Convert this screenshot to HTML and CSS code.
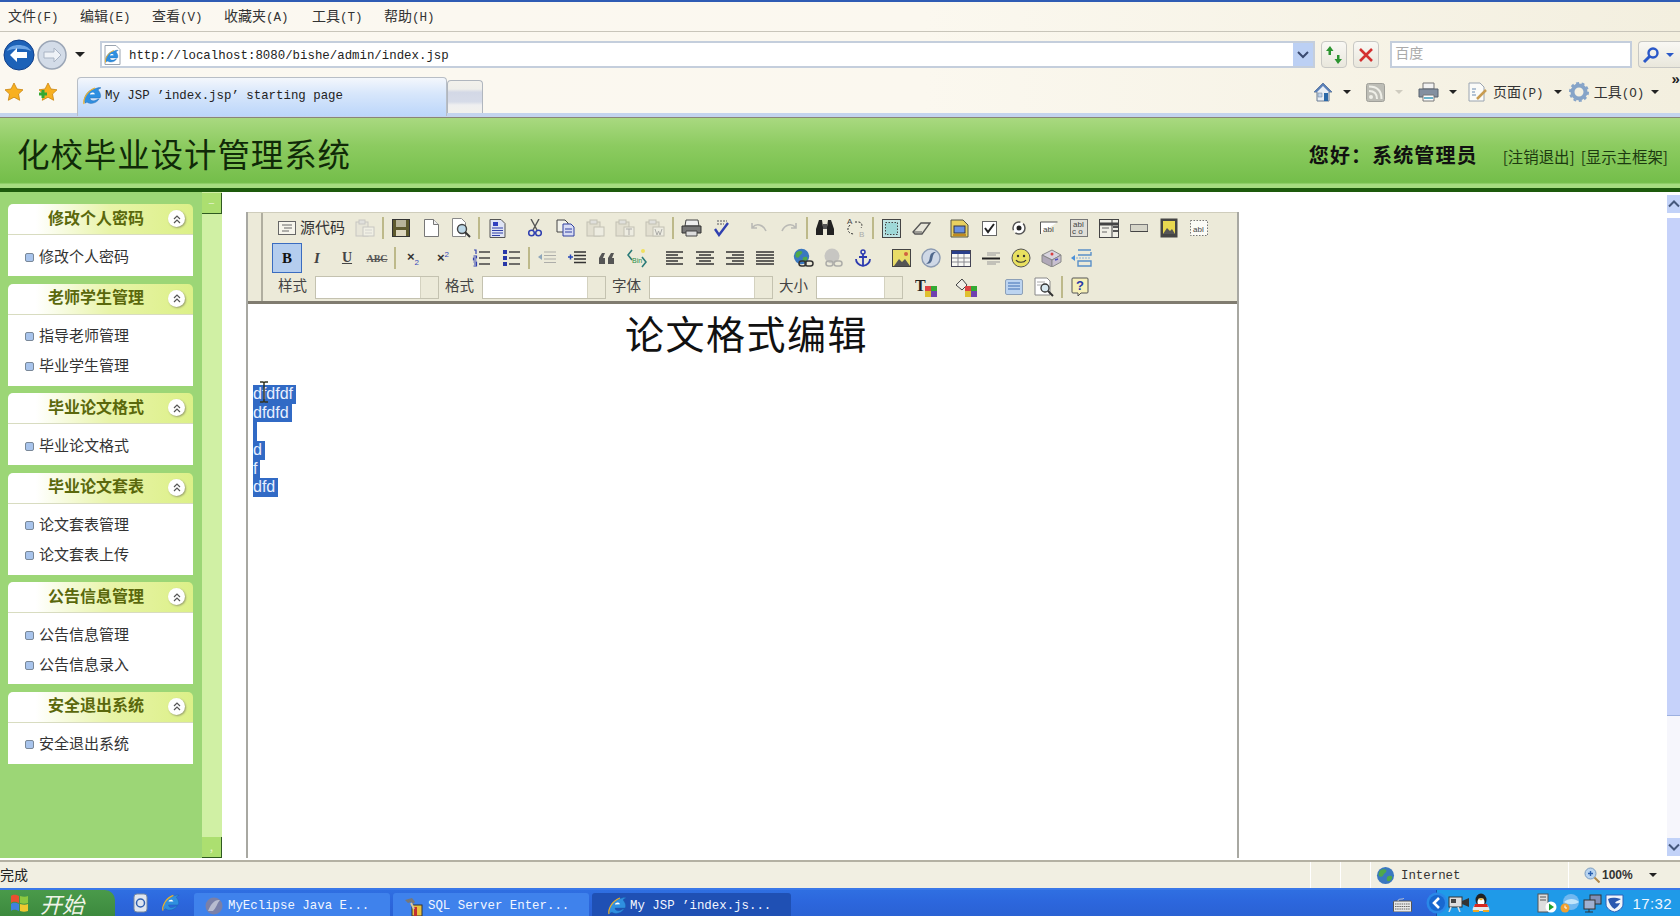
FILE: index.html
```html
<!DOCTYPE html>
<html lang="zh">
<head>
<meta charset="utf-8">
<title>化校毕业设计管理系统</title>
<link rel="stylesheet" href="styles.css">
</head>
<body>
<svg class="defs" width="0" height="0" aria-hidden="true">
  <defs>
    <symbol id="ie" viewBox="0 0 20 20">
      <path d="M3 17C1 13 4 5 12 3c3-1 6-2 7-1-1 0-2 1-3 2 3 3 3 7 2 8H8c0 3 4 4 8 1l1 0c-2 4-9 6-12 3-1 1-2 1-2 1z" fill="#2f8fe0" stroke="#1a5fa8" stroke-width=".4"/>
      <path d="M8 8.500c0-2 4-3 5-.2z" fill="#fff"/>
      <path d="M2 18C1 13 5 5 13 2" fill="none" stroke="#e8b030" stroke-width="1.300"/>
    </symbol>
    <symbol id="globe" viewBox="0 0 20 20">
      <circle cx="10" cy="10" r="9" fill="#3a78c0"/>
      <path d="M4 5c3-2 6-2 7 0 0 2-2 2-3 4s-2 3-4 2-1-4 0-6zM12 11c2-1 5-1 5 1s-2 4-4 4-2-3-1-5z" fill="#4fa84a"/>
    </symbol>
    <symbol id="fav" viewBox="0 0 20 20">
      <path d="M10 1l3 6 6 .8-4.500 4.200 1.200 6.300L10 15.200l-5.700 3.100L5.500 12 1 7.800 7 7z" fill="#f8b020" stroke="#c88410" stroke-width=".8"/>
    </symbol>
  </defs>
</svg>

<header class="browser">
  <nav class="menubar">
    <span class="menu">文件<i>(F)</i></span>
    <span class="menu">编辑<i>(E)</i></span>
    <span class="menu">查看<i>(V)</i></span>
    <span class="menu menu-wide">收藏夹<i>(A)</i></span>
    <span class="menu">工具<i>(T)</i></span>
    <span class="menu">帮助<i>(H)</i></span>
  </nav>

  <div class="addressrow">
    <div class="navpill">
      <svg class="nav-back" width="32" height="32" viewBox="0 0 32 32"><circle cx="16" cy="16" r="15" fill="#1d62b8" stroke="#12408a"/><path d="M4 12c3-8 20-8 24 0-6-3-18-3-24 0z" fill="#6ea6e6"/><path d="M7 16l7-7v4h10v6H14v4z" fill="#fff"/></svg>
      <svg class="nav-fwd" width="30" height="30" viewBox="0 0 30 30"><circle cx="15" cy="15" r="14" fill="#d3dce8" stroke="#9ba6b6" stroke-width="1.500"/><path d="M24 15l-7-7v4H7v6h10v4z" fill="#eef2f7" stroke="#a9b4c4"/></svg>
    </div>
    <span class="caret caret-nav"></span>
    <div class="address">
      <svg class="pageicon" width="17" height="20" viewBox="0 0 17 20"><path d="M1 .5h11l4 4v15H1z" fill="#fff" stroke="#9aa4b0"/><use href="#ie" x="0" y="4" width="15" height="15"/></svg>
      <span class="url">http://localhost:8080/bishe/admin/index.jsp</span>
      <span class="addr-drop"><svg width="12" height="8" viewBox="0 0 12 8"><path d="M1 1l5 5 5-5" fill="none" stroke="#3a4a70" stroke-width="2"/></svg></span>
    </div>
    <span class="chromebtn"><svg width="18" height="18" viewBox="0 0 18 18"><path d="M6 9V5H8.500L5 0 1 5h2.500v4zM12 9v4H9.500l3.500 5 4-5h-2.500V9z" fill="#2c9430"/></svg></span>
    <span class="chromebtn"><svg width="16" height="16" viewBox="0 0 16 16"><path d="M2 2l12 12M14 2L2 14" stroke="#d43030" stroke-width="2.600"/></svg></span>
    <div class="searchbox">百度</div>
    <div class="searchbtn">
      <svg width="18" height="18" viewBox="0 0 18 18"><circle cx="11" cy="7" r="4.500" fill="none" stroke="#2a58c8" stroke-width="2.400"/><path d="M8 10l-6 6" stroke="#2a58c8" stroke-width="3"/></svg>
      <span class="caret caret-blue"></span>
    </div>
  </div>

  <div class="tabrow">
    <div class="favs">
      <svg width="20" height="20"><use href="#fav"/></svg>
      <svg width="20" height="20" viewBox="0 0 20 20"><use href="#fav"/><path d="M1 12h8M5 8v8" stroke="#34a834" stroke-width="3"/></svg>
    </div>
    <div class="tab">
      <svg width="20" height="20"><use href="#ie"/></svg>
      <span class="tabtext">My JSP ’index.jsp’ starting page</span>
    </div>
    <div class="newtab"></div>
    <div class="commands">
      <svg class="cmd-home" width="20" height="20" viewBox="0 0 20 20"><path d="M10 1L1 10h3v9h12v-9h3z" fill="#e9eef4" stroke="#6a7c94"/><path d="M10 1L1 10h3l6-6 6 6h3z" fill="#5a80b8"/><path d="M11 11h4v8h-4z" fill="#2a68a8"/><path d="M5 11h4v4H5z" fill="#bcd0e8" stroke="#6a7c94" stroke-width=".5"/></svg>
      <span class="caret caret-cmd"></span>
      <svg class="cmd-rss" width="19" height="19" viewBox="0 0 19 19"><rect x=".5" y=".5" width="18" height="18" rx="2" fill="#bdbdb6" stroke="#a0a09a"/><circle cx="5" cy="14" r="2" fill="#efefe8"/><path d="M3 8c5 0 8 3 8 8M3 3.500c8 0 12.500 4.500 12.500 12.500" fill="none" stroke="#efefe8" stroke-width="2"/></svg>
      <span class="caret caret-cmd caret-faded"></span>
      <svg class="cmd-print" width="21" height="20" viewBox="0 0 21 20"><path d="M5 1h11v6H5z" fill="#f2f2f2" stroke="#777"/><path d="M1 7h19v8H1z" fill="#8490a0" stroke="#59636f"/><path d="M5 13h11v6H5z" fill="#fff" stroke="#777"/><path d="M6 16h9" stroke="#3a9ab8" stroke-width="1.500"/></svg>
      <span class="caret caret-cmd"></span>
      <svg class="cmd-page" width="20" height="20" viewBox="0 0 20 20"><path d="M1 1h11l4 4v14H1z" fill="#fbfbf8" stroke="#9aa4b0"/><path d="M4 7h4M4 10h3M4 13h4" stroke="#6a8ab0"/><path d="M9 17l9-9" stroke="#c89c50" stroke-width="2.500"/></svg>
      <span class="cmdtext">页面<i>(P)</i></span>
      <span class="caret caret-cmd"></span>
      <svg class="cmd-gear" width="20" height="20" viewBox="0 0 20 20"><circle cx="10" cy="10" r="6.500" fill="none" stroke="#86a4c8" stroke-width="4"/><circle cx="10" cy="10" r="9" fill="none" stroke="#86a4c8" stroke-width="2" stroke-dasharray="3 2.600"/></svg>
      <span class="cmdtext">工具<i>(O)</i></span>
      <span class="caret caret-cmd caret-last"></span>
      <span class="more">»</span>
    </div>
  </div>
</header>

<section class="banner">
  <h1 class="sys-title">化校毕业设计管理系统</h1>
  <div class="welcome">您好：系统管理员</div>
  <a class="banner-link">[注销退出]</a>
  <a class="banner-link">[显示主框架]</a>
</section>

<main class="workspace">
  <aside class="sidebar">
    <section class="card">
      <h2 class="card-head">修改个人密码<span class="toggle"><svg width="10" height="10" viewBox="0 0 10 10"><path d="M2 5l3-3 3 3M2 9l3-3 3 3" fill="none" stroke="#555" stroke-width="1.200"/></svg></span></h2>
      <ul class="card-body"><li>修改个人密码</li></ul>
    </section>
    <section class="card">
      <h2 class="card-head">老师学生管理<span class="toggle"><svg width="10" height="10" viewBox="0 0 10 10"><path d="M2 5l3-3 3 3M2 9l3-3 3 3" fill="none" stroke="#555" stroke-width="1.200"/></svg></span></h2>
      <ul class="card-body"><li>指导老师管理</li><li>毕业学生管理</li></ul>
    </section>
    <section class="card">
      <h2 class="card-head">毕业论文格式<span class="toggle"><svg width="10" height="10" viewBox="0 0 10 10"><path d="M2 5l3-3 3 3M2 9l3-3 3 3" fill="none" stroke="#555" stroke-width="1.200"/></svg></span></h2>
      <ul class="card-body"><li>毕业论文格式</li></ul>
    </section>
    <section class="card">
      <h2 class="card-head">毕业论文套表<span class="toggle"><svg width="10" height="10" viewBox="0 0 10 10"><path d="M2 5l3-3 3 3M2 9l3-3 3 3" fill="none" stroke="#555" stroke-width="1.200"/></svg></span></h2>
      <ul class="card-body"><li>论文套表管理</li><li>论文套表上传</li></ul>
    </section>
    <section class="card">
      <h2 class="card-head">公告信息管理<span class="toggle"><svg width="10" height="10" viewBox="0 0 10 10"><path d="M2 5l3-3 3 3M2 9l3-3 3 3" fill="none" stroke="#555" stroke-width="1.200"/></svg></span></h2>
      <ul class="card-body"><li>公告信息管理</li><li>公告信息录入</li></ul>
    </section>
    <section class="card">
      <h2 class="card-head">安全退出系统<span class="toggle"><svg width="10" height="10" viewBox="0 0 10 10"><path d="M2 5l3-3 3 3M2 9l3-3 3 3" fill="none" stroke="#555" stroke-width="1.200"/></svg></span></h2>
      <ul class="card-body"><li>安全退出系统</li></ul>
    </section>
  </aside>

  <div class="splitter">
    <span class="split-btn">–</span>
    <span class="split-btn">,</span>
  </div>

  <div class="content">
    <div class="editor">
      <div class="toolbar">
        <div class="grip"></div>
        <div class="rows">
          <div class="tbrow">
            <span class="src"><svg width="18" height="16" viewBox="0 0 18 16"><rect x=".5" y="1.500" width="17" height="13" fill="#f6f5ec" stroke="#666"/><path d="M4 5h10M6 8h8M4 11h7" stroke="#666"/></svg><b>源代码</b></span>
            <span class="tb faded"><svg width="20" height="18" viewBox="0 0 20 18"><rect x="1" y="3" width="12" height="14" fill="#e6e4d8" stroke="#bbb"/><rect x="4" y="1" width="6" height="4" fill="#ddd" stroke="#bbb"/><rect x="8" y="8" width="11" height="9" fill="#f2f1e8" stroke="#bbb"/><path d="M10 11h7M10 14h7" stroke="#ccc"/></svg></span>
            <span class="sep"></span>
            <span class="tb"><svg width="18" height="18" viewBox="0 0 18 18"><rect x=".5" y=".5" width="17" height="17" fill="#5e5a2e" stroke="#333"/><rect x="4" y="1" width="10" height="7" fill="#b8b49a"/><rect x="4" y="11" width="10" height="6" fill="#ded8c0"/></svg></span>
            <span class="tb"><svg width="17" height="18" viewBox="0 0 17 18"><path d="M1.500.5h9l5 5v12h-14z" fill="#fff" stroke="#777"/><path d="M10.500.5v5h5" fill="#eee" stroke="#777"/></svg></span>
            <span class="tb"><svg width="20" height="20" viewBox="0 0 20 20"><path d="M1.500.5h9l4 4v14h-13z" fill="#fff" stroke="#888"/><circle cx="11" cy="11" r="4.500" fill="#bcd8e8" stroke="#444" stroke-width="1.400"/><path d="M14 14l5 5" stroke="#333" stroke-width="2"/></svg></span>
            <span class="sep"></span>
            <span class="tb"><svg width="17" height="19" viewBox="0 0 17 19"><path d="M1 .5h11l4 4v14H1z" fill="#dfe4f4" stroke="#555"/><rect x="4" y="3" width="5" height="4" fill="#3040c0"/><path d="M3 9h11M3 11.500h11M3 14h11M3 16.500h8" stroke="#3040a8"/></svg></span>
            <span class="tb gap"><svg width="14" height="18" viewBox="0 0 14 18"><path d="M3 0l6 11M11 0L5 11" stroke="#555" stroke-width="1.400"/><circle cx="3.500" cy="14" r="2.800" fill="none" stroke="#3040b0" stroke-width="1.500"/><circle cx="10.500" cy="14" r="2.800" fill="none" stroke="#3040b0" stroke-width="1.500"/></svg></span>
            <span class="tb"><svg width="19" height="18" viewBox="0 0 19 18"><path d="M1 1h8l3 3v9H1z" fill="#f2f2ea" stroke="#444"/><path d="M7 5h8l3 3v9H7z" fill="#d8dcf4" stroke="#3040a0"/><path d="M9 10h7M9 13h7" stroke="#3040a0"/></svg></span>
            <span class="tb faded"><svg width="19" height="18" viewBox="0 0 19 18"><rect x="1" y="3" width="13" height="14" fill="#dfdccd" stroke="#b5b3a8"/><rect x="4" y="1" width="7" height="4" fill="#ddd" stroke="#b5b3a8"/><rect x="8" y="8" width="10" height="9" fill="#eeede4" stroke="#b5b3a8"/></svg></span>
            <span class="tb faded"><svg width="20" height="18" viewBox="0 0 20 18"><rect x="1" y="3" width="13" height="14" fill="#dfdccd" stroke="#b5b3a8"/><rect x="4" y="1" width="7" height="4" fill="#ddd" stroke="#b5b3a8"/><rect x="9" y="8" width="10" height="9" fill="#eeede4" stroke="#b5b3a8"/><path d="M11 10h6M14 10v6" stroke="#999"/></svg></span>
            <span class="tb faded"><svg width="20" height="18" viewBox="0 0 20 18"><rect x="1" y="3" width="13" height="14" fill="#dfdccd" stroke="#b5b3a8"/><rect x="4" y="1" width="7" height="4" fill="#ddd" stroke="#b5b3a8"/><rect x="8" y="8" width="11" height="9" fill="#eeede4" stroke="#b5b3a8"/><path d="M10 10l2 6 1.500-4 1.500 4 2-6" fill="none" stroke="#999"/></svg></span>
            <span class="sep"></span>
            <span class="tb"><svg width="21" height="18" viewBox="0 0 21 18"><path d="M5 1h12l1 6H4z" fill="#eee" stroke="#444"/><path d="M1 7h19v7H1z" fill="#777" stroke="#333"/><path d="M5 12h11v5H5z" fill="#ddd" stroke="#444"/></svg></span>
            <span class="tb"><svg width="18" height="18" viewBox="0 0 18 18"><path d="M3 10l4 6 9-12" fill="none" stroke="#3040b0" stroke-width="2.400"/><path d="M5 2h10M5 5h7" stroke="#888" stroke-width="1.600" stroke-dasharray="2 1"/></svg></span>
            <span class="tb gap faded"><svg width="16" height="12" viewBox="0 0 16 12"><path d="M1 1v5h5M1.500 5.500C5 1 12 2 15 9" fill="none" stroke="#aaa" stroke-width="1.600"/></svg></span>
            <span class="tb faded"><svg width="16" height="12" viewBox="0 0 16 12"><path d="M15 1v5h-5M14.500 5.500C11 1 4 2 1 9" fill="none" stroke="#aaa" stroke-width="1.600"/></svg></span>
            <span class="sep"></span>
            <span class="tb"><svg width="20" height="18" viewBox="0 0 20 18"><path d="M4 1h3l1 7v8H1v-6zM16 1h-3l-1 7v8h7v-6z" fill="#222"/><rect x="8" y="5" width="4" height="5" fill="#555"/></svg></span>
            <span class="tb"><svg width="21" height="20" viewBox="0 0 21 20"><path d="M5 7C1 11 3 16 9 16" fill="none" stroke="#333" stroke-dasharray="2 1.500"/><path d="M10 4h4c4 1 3 5 2 6" fill="none" stroke="#333" stroke-dasharray="2 1.500"/><text class="svgtxt" x="2" y="6">A</text><text class="svgtxt svgfade" x="14" y="19">B</text></svg></span>
            <span class="sep"></span>
            <span class="tb"><svg width="19" height="19" viewBox="0 0 19 19"><rect x=".5" y=".5" width="18" height="18" fill="#bfe4e4" stroke="#444"/><path d="M3.500 3.500h12v12h-12z" fill="#9ed8d8" stroke="#444" stroke-dasharray="1.500 1.500"/></svg></span>
            <span class="tb"><svg width="19" height="14" viewBox="0 0 19 14"><path d="M1 11l8-9 9 0-8 11H3z" fill="#e8e6da" stroke="#555" stroke-width="1.300"/><path d="M1 11h9" stroke="#555"/></svg></span>
            <span class="tb gap"><svg width="19" height="19" viewBox="0 0 19 19"><path d="M1 1h12l5 5v12H1z" fill="#e8d060" stroke="#554"/><rect x="4" y="7" width="11" height="7" fill="#6890e0" stroke="#334"/><path d="M3 16h13" stroke="#c08a20" stroke-width="2"/></svg></span>
            <span class="tb"><svg width="15" height="15" viewBox="0 0 15 15"><rect x=".5" y=".5" width="14" height="14" fill="#fff" stroke="#666"/><path d="M3 7l3 4 6-8" fill="none" stroke="#222" stroke-width="2"/></svg></span>
            <span class="tb"><svg width="14" height="14" viewBox="0 0 14 14"><circle cx="7" cy="7" r="6" fill="#fff" stroke="#555" stroke-width="1.500" stroke-dasharray="13 3"/><circle cx="7" cy="7" r="2.500" fill="#222"/></svg></span>
            <span class="tb"><svg width="18" height="14" viewBox="0 0 18 14"><path d="M17.500 1H.5v12" fill="#fff" stroke="#555"/><text class="svgtxt" x="3" y="11">abl</text></svg></span>
            <span class="tb"><svg width="18" height="18" viewBox="0 0 18 18"><rect x=".5" y=".5" width="17" height="17" fill="#e0dfd8" stroke="#777"/><text class="svgtxt" x="3" y="8">abl</text><text class="svgtxt" x="2" y="15">c o</text></svg></span>
            <span class="tb"><svg width="20" height="19" viewBox="0 0 20 19"><rect x=".5" y=".5" width="19" height="18" fill="#f0efe6" stroke="#444"/><path d="M1 5h18" stroke="#444" stroke-width="3"/><path d="M13 1v17" stroke="#444"/><path d="M3 9h7M3 13h5" stroke="#666"/><path d="M14 8h5M14 12h5" stroke="#555" stroke-width="2"/></svg></span>
            <span class="tb"><svg width="18" height="8" viewBox="0 0 18 8"><rect x=".5" y=".5" width="17" height="7" fill="#d6d5c8" stroke="#777"/><path d="M1 7.500h17" stroke="#444"/></svg></span>
            <span class="tb"><svg width="18" height="20" viewBox="0 0 18 20"><rect x=".5" y=".5" width="17" height="19" fill="#444"/><rect x="3" y="3" width="12" height="13" fill="#e8d850"/><path d="M3 16l4-6 3 3 2-2 3 5z" fill="#555"/></svg></span>
            <span class="tb"><svg width="18" height="16" viewBox="0 0 18 16"><rect x=".5" y=".5" width="17" height="15" fill="#fbfbf6" stroke="#777" stroke-dasharray="1.500 1.500"/><text class="svgtxt" x="3" y="12">abl</text></svg></span>
          </div>

          <div class="tbrow">
            <span class="tb active"><b class="gl-b">B</b></span>
            <span class="tb"><i class="gl-i">I</i></span>
            <span class="tb"><u class="gl-u">U</u></span>
            <span class="tb"><s class="gl-s">ABC</s></span>
            <span class="sep"></span>
            <span class="tb"><span class="gl-x">×<sub>2</sub></span></span>
            <span class="tb"><span class="gl-x">×<sup>2</sup></span></span>
            <span class="tb gap-s"><svg width="18" height="18" viewBox="0 0 18 18"><path d="M7 3h11M7 9h11M7 15h11" stroke="#444" stroke-width="1.300"/><path d="M2 1h2v4M1.500 7h3v2h-3v2h3M1.500 13h3v4h-3M2 15h2" fill="none" stroke="#3040b0" stroke-width="1.200"/></svg></span>
            <span class="tb"><svg width="18" height="18" viewBox="0 0 18 18"><path d="M7 3h11M7 9h11M7 15h11" stroke="#444" stroke-width="1.300"/><path d="M1 1h4v4H1zM1 7h4v4H1zM1 13h4v4H1z" fill="#2838a8"/></svg></span>
            <span class="sep"></span>
            <span class="tb faded"><svg width="20" height="18" viewBox="0 0 20 18"><path d="M7 3h12M7 6.500h12M7 10h12M7 13.500h12" stroke="#999" stroke-width="1.200"/><path d="M1 8l4-3v6z" fill="#7090b0"/></svg></span>
            <span class="tb"><svg width="20" height="18" viewBox="0 0 20 18"><path d="M7 3h12M7 6.500h12M7 10h12M7 13.500h12" stroke="#333" stroke-width="1.300"/><path d="M1 8h5M3.500 5.500v5" stroke="#2848b8" stroke-width="1.500"/></svg></span>
            <span class="tb"><svg width="18" height="12" viewBox="0 0 18 12"><path d="M4 1h3L5 6h2v6H1V6zM13 1h3l-2 5h2v6h-6V6z" fill="#555"/></svg></span>
            <span class="tb"><svg width="20" height="20" viewBox="0 0 20 20"><path d="M5 2L1 7l4 5M15 9l4 5-4 5" fill="none" stroke="#2a7a78" stroke-width="1.600"/><text class="svgtxt svggreen" x="5" y="15">Bin</text><circle cx="16" cy="3" r="2" fill="#f0e060"/></svg></span>
            <span class="tb gap-s"><svg class="al" width="18" height="14" viewBox="0 0 18 14"><path d="M0 1h17M0 4h12M0 7h17M0 10h12M0 13h17" stroke="#333" stroke-width="1.300"/></svg></span>
            <span class="tb"><svg class="al" width="18" height="14" viewBox="0 0 18 14"><path d="M0 1h18M3 4h12M0 7h18M3 10h12M0 13h18" stroke="#333" stroke-width="1.300"/></svg></span>
            <span class="tb"><svg class="al" width="18" height="14" viewBox="0 0 18 14"><path d="M0 1h18M6 4h12M0 7h18M6 10h12M0 13h18" stroke="#333" stroke-width="1.300"/></svg></span>
            <span class="tb"><svg class="al" width="18" height="14" viewBox="0 0 18 14"><path d="M0 1h18M0 4h18M0 7h18M0 10h18M0 13h18" stroke="#333" stroke-width="1.300"/></svg></span>
            <span class="tb gap-s"><svg width="21" height="20" viewBox="0 0 21 20"><use href="#globe" width="17" height="17"/><rect x="6" y="13" width="7" height="5" rx="2.500" fill="none" stroke="#333" stroke-width="1.500"/><rect x="12" y="13" width="8" height="5" rx="2.500" fill="none" stroke="#333" stroke-width="1.500"/></svg></span>
            <span class="tb faded"><svg width="20" height="20" viewBox="0 0 20 20"><circle cx="9" cy="8" r="7.500" fill="#bbb"/><rect x="3" y="13" width="7" height="5" rx="2.500" fill="none" stroke="#999" stroke-width="1.500"/><rect x="11" y="13" width="8" height="5" rx="2.500" fill="none" stroke="#999" stroke-width="1.500"/></svg></span>
            <span class="tb"><svg width="16" height="18" viewBox="0 0 16 18"><circle cx="8" cy="3" r="2" fill="none" stroke="#2c3ab0" stroke-width="1.500"/><path d="M8 5v12M4 8h8M1 10c0 4 3 6 7 7 4-1 7-3 7-7" fill="none" stroke="#2c3ab0" stroke-width="1.800"/></svg></span>
            <span class="tb gap-s"><svg width="19" height="18" viewBox="0 0 19 18"><rect x=".5" y=".5" width="18" height="17" fill="#e8dc68" stroke="#444"/><path d="M2 17l5-7 3 3 3-3 5 7z" fill="#555"/><circle cx="14" cy="5" r="2" fill="#d06040"/></svg></span>
            <span class="tb"><svg width="20" height="20" viewBox="0 0 20 20"><circle cx="10" cy="10" r="9" fill="#cfd8e6" stroke="#8c9bb2" stroke-width="1.400"/><path d="M15 4C9 4 9 8 8.500 11S6 15 5 16c5 0 6-3 6.500-6S13 5 15 4z" fill="#50688c"/></svg></span>
            <span class="tb"><svg width="20" height="17" viewBox="0 0 20 17"><rect x=".5" y=".5" width="19" height="16" fill="#f8f8f4" stroke="#445"/><path d="M1 2.500h18" stroke="#2a3f8a" stroke-width="3"/><path d="M1 8h18M1 12h18M7 4v12M13 4v12" stroke="#8a8a90"/></svg></span>
            <span class="tb"><svg width="18" height="15" viewBox="0 0 18 15"><path d="M0 7.500h18" stroke="#222" stroke-width="2"/><path d="M5 2h13M5 4h9M5 11h13M5 13h9" stroke="#999"/></svg></span>
            <span class="tb"><svg width="20" height="20" viewBox="0 0 20 20"><circle cx="10" cy="10" r="9" fill="#e8e060" stroke="#555"/><circle cx="7" cy="8" r="1.200" fill="#333"/><circle cx="13" cy="8" r="1.200" fill="#333"/><path d="M5 12c2 3 8 3 10 0" fill="none" stroke="#333" stroke-width="1.200"/></svg></span>
            <span class="tb"><svg width="21" height="18" viewBox="0 0 21 18"><path d="M1 6l10-5 9 5-9 5z" fill="#d8d4de" stroke="#888"/><path d="M1 6v7l10 5V11z" fill="#b0a8b8" stroke="#888"/><path d="M20 6v7l-9 5V11z" fill="#c8c0d0" stroke="#888"/><circle cx="11" cy="5" r="1.500" fill="#d84040"/><path d="M14 11l3-1" stroke="#5050c0" stroke-width="1.500"/></svg></span>
            <span class="tb"><svg width="21" height="18" viewBox="0 0 21 18"><path d="M7 1h13M7 6h13v-3M7 12h13v5H7z" fill="none" stroke="#5a90c8" stroke-width="1.400"/><path d="M0 9l4-3v6z" fill="#4a90d8"/><path d="M5 9h15" stroke="#8ab0d8" stroke-dasharray="2 1"/></svg></span>
          </div>

          <div class="tbrow tbrow-form">
            <label class="lbl">样式</label><span class="combo"><span class="combo-in"></span><span class="combo-btn"></span></span>
            <label class="lbl">格式</label><span class="combo"><span class="combo-in"></span><span class="combo-btn"></span></span>
            <label class="lbl">字体</label><span class="combo"><span class="combo-in"></span><span class="combo-btn"></span></span>
            <label class="lbl">大小</label><span class="combo combo-s"><span class="combo-in"></span><span class="combo-btn"></span></span>
            <span class="tb tb-color"><svg width="22" height="19" viewBox="0 0 22 19"><text class="svgtxt svgT" x="0" y="13">T</text><rect x="10" y="8" width="12" height="11" fill="#d44"/><rect x="16" y="8" width="6" height="5" fill="#3a3"/><rect x="10" y="13" width="6" height="6" fill="#e0c030"/><rect x="16" y="13" width="6" height="6" fill="#7040b0"/></svg></span>
            <span class="tb tb-color2"><svg width="22" height="19" viewBox="0 0 22 19"><path d="M1 7l6-6 5 6-5 5z" fill="#f0efe6" stroke="#444"/><rect x="10" y="8" width="12" height="11" fill="#d44"/><rect x="16" y="8" width="6" height="5" fill="#3a3"/><rect x="10" y="13" width="6" height="6" fill="#e0c030"/><rect x="16" y="13" width="6" height="6" fill="#7040b0"/></svg></span>
            <span class="tb tb-max"><svg width="18" height="16" viewBox="0 0 18 16"><rect x=".5" y=".5" width="17" height="15" rx="1.500" fill="#bcd4f0" stroke="#8ca0b8"/><path d="M3 4h12M3 7h12M3 10h12" stroke="#6890c8" stroke-width="1.400"/></svg></span>
            <span class="tb"><svg width="21" height="20" viewBox="0 0 21 20"><path d="M1 1h12l3 3v14H1z" fill="#fff" stroke="#888"/><path d="M3 5h8M3 8h5" stroke="#aaa"/><circle cx="11" cy="11" r="4" fill="#d8e8f0" stroke="#333" stroke-width="1.300"/><path d="M14 14l5 5" stroke="#333" stroke-width="2"/></svg></span>
            <span class="sep"></span>
            <span class="tb"><svg width="18" height="20" viewBox="0 0 18 20"><path d="M2 1h14q1 0 1 1v13q0 1-1 1H10l-3 3v-3H2q-1 0-1-1V2q0-1 1-1z" fill="#f6f0b8" stroke="#555"/><text class="svgtxt svgQ" x="5" y="13">?</text></svg></span>
          </div>
        </div>
      </div>

      <div class="doc">
        <h2 class="doc-title">论文格式编辑</h2>
        <p class="sel-line"><span class="sel">dfdfdf</span></p>
        <p class="sel-line"><span class="sel">dfdfd</span></p>
        <p class="sel-line"><span class="sel sel-blank"></span></p>
        <p class="sel-line"><span class="sel">d</span></p>
        <p class="sel-line"><span class="sel">f</span></p>
        <p class="sel-line"><span class="sel">dfd</span></p>
        <svg class="ibeam" width="10" height="22" viewBox="0 0 10 22"><path d="M1 1h3l1 1 1-1h3M5 2v18M1 21h3l1-1 1 1h3" fill="none" stroke="#332" stroke-width="1.500"/></svg>
      </div>
    </div>
  </div>

  <div class="scrollbar">
    <span class="sb-btn"><svg width="12" height="8" viewBox="0 0 12 8"><path d="M1 6.500l5-5 5 5" fill="none" stroke="#45587c" stroke-width="2"/></svg></span>
    <span class="sb-thumb"></span>
    <span class="sb-track"></span>
    <span class="sb-btn"><svg width="12" height="8" viewBox="0 0 12 8"><path d="M1 1.500l5 5 5-5" fill="none" stroke="#45587c" stroke-width="2"/></svg></span>
  </div>
</main>

<footer class="statusbar">
  <span class="status-done">完成</span>
  <span class="st-cell"></span>
  <span class="st-cell"></span>
  <span class="st-zone">
    <svg width="19" height="19"><use href="#globe"/></svg>
    <span class="zone-text">Internet</span>
  </span>
  <span class="st-zoom">
    <svg width="16" height="16" viewBox="0 0 16 16"><circle cx="6.500" cy="6.500" r="5.500" fill="#b8d4f0" stroke="#7a9cc0"/><path d="M4 6.500h5M6.500 4v5" stroke="#2a60b0" stroke-width="1.400"/><path d="M10.500 10.500l5 5" stroke="#b08848" stroke-width="2"/></svg>
    <span class="zoom-text">100%</span>
    <span class="caret caret-cmd caret-zoom"></span>
  </span>
</footer>

<footer class="taskbar">
  <div class="start">
    <svg width="20" height="20" viewBox="0 0 20 20"><path d="M1 3c3-2 5-1 8 0v7C6 9 4 8 1 10z" fill="#e85030"/><path d="M10 3c3 1 6 1 8 0v7c-3 1-5 1-8 0z" fill="#8cc840"/><path d="M1 11c3-2 5-1 8 0v7c-3-1-5-2-8 0z" fill="#4080e0"/><path d="M10 11c3 1 6 1 8 0v7c-3 1-5 1-8 0z" fill="#f0c830"/></svg>
    <span class="start-text">开始</span>
  </div>
  <div class="quick">
    <svg width="19" height="20" viewBox="0 0 19 20"><rect x="3" y="1" width="13" height="18" rx="3" fill="#dfe6f0" stroke="#7a8aa0"/><circle cx="9.500" cy="10" r="4" fill="none" stroke="#3060b0" stroke-width="1.500"/></svg>
    <svg width="19" height="20"><use href="#ie"/></svg>
  </div>
  <div class="task">
    <svg width="18" height="18" viewBox="0 0 18 18"><circle cx="9" cy="9" r="8.500" fill="#7a80a8"/><path d="M3 14C7 4 11 3 15 3c-3 3-3 7-7 11z" fill="#b8bcd0"/></svg>
    <span>MyEclipse Java E...</span>
  </div>
  <div class="task">
    <svg width="19" height="19" viewBox="0 0 19 19"><rect x="8" y="8" width="10" height="11" fill="#e8c040" stroke="#333"/><rect x="10" y="10" width="3" height="9" fill="#c03030"/><path d="M1 3l7-2 3 4-2 2-2-2-3 1z" fill="#777"/><path d="M7 6l3 6" stroke="#d8c8a0" stroke-width="2"/></svg>
    <span>SQL Server Enter...</span>
  </div>
  <div class="task task-active">
    <svg width="20" height="20"><use href="#ie"/></svg>
    <span>My JSP ’index.js...</span>
  </div>
  <svg class="kbd" width="19" height="14" viewBox="0 0 19 14"><rect x=".5" y="3" width="18" height="11" rx="1" fill="#e8e8e8" stroke="#555"/><path d="M2 6h15M2 8.500h15M2 11h15" stroke="#666" stroke-dasharray="1.500 .7"/><path d="M5 3c0-3 5-1 6-3" fill="none" stroke="#ccc"/></svg>
  <div class="tray">
    <svg class="tray-back" width="22" height="22" viewBox="0 0 22 22"><circle cx="11" cy="11" r="10.500" fill="#2a88e8"/><circle cx="11" cy="11" r="8" fill="#1868d0"/><path d="M13 6l-5 5 5 5" fill="none" stroke="#fff" stroke-width="2.600"/></svg>
    <svg class="tray-cam" width="22" height="18" viewBox="0 0 22 18"><rect x="1" y="3" width="13" height="10" fill="#ddd" stroke="#333"/><path d="M14 7l7-3v9l-7-3z" fill="#333"/><path d="M3 13l-2 5M10 13l2 5" stroke="#ddd" stroke-width="1.500"/><rect x="3" y="5" width="5" height="4" fill="#444"/></svg>
    <svg class="tray-qq" width="18" height="20" viewBox="0 0 18 20"><ellipse cx="9" cy="7" rx="5.500" ry="6.500" fill="#222"/><ellipse cx="9" cy="9" rx="3.500" ry="3.800" fill="#fff"/><path d="M3 12c-3 3-3 6-1 6h14c2 0 2-3-1-6z" fill="#e8e8e8"/><path d="M3 11h12l1 3H2z" fill="#d82820"/><path d="M6 5.500h6l-3 2z" fill="#f0b020"/><path d="M1 18h6M11 18h6" stroke="#f0a820" stroke-width="2"/></svg>
    <svg class="tray-first" width="20" height="20" viewBox="0 0 20 20"><rect x="1" y="1" width="10" height="18" fill="#ddd" stroke="#555"/><path d="M3 4h6M3 7h6" stroke="#555"/><circle cx="14" cy="14" r="5.500" fill="#fff"/><path d="M12 10.500l5 3.500-5 3.500z" fill="#20a030"/></svg>
    <svg class="tray-icon" width="20" height="20" viewBox="0 0 20 20"><circle cx="11" cy="9" r="8" fill="#70b8f0"/><path d="M4 9c4-4 11-4 15 0-4 3-11 3-15 0z" fill="#c0e4fa"/><circle cx="5" cy="15" r="4.500" fill="#f0a030"/><path d="M5 12.500V15h2" stroke="#fff" fill="none"/></svg>
    <svg class="tray-icon" width="19" height="19" viewBox="0 0 19 19"><rect x="7" y="1" width="11" height="9" fill="#8090b8" stroke="#333"/><rect x="1" y="6" width="11" height="9" fill="#a0b0d0" stroke="#333"/><path d="M6 15v3M2 18h8" stroke="#333"/></svg>
    <svg class="tray-icon" width="19" height="19" viewBox="0 0 19 19"><path d="M1 1h17v9c0 4-4 7-8.500 8C5 17 1 14 1 10z" fill="#f0f4fa" stroke="#2a60b8"/><path d="M3 5c4-2 8-1 13 0-3 2-5 2-6 4 2 1 4 0 5 0-1 3-4 5-5.500 6C6 13 4 9 3 5z" fill="#2a58b0"/></svg>
    <span class="clock">17:32</span>
  </div>
</footer>
</body>
</html>
```

FILE: styles.css
```css
* { box-sizing: border-box; }
html, body { margin: 0; padding: 0; }
body {
  width: 1680px;
  height: 916px;
  overflow: hidden;
  display: flex;
  flex-direction: column;
  font-family: "Noto Sans CJK SC", "Liberation Sans", sans-serif;
  color: #222;
  background: #fff;
}
.defs { position: absolute; }
i { font-style: normal; font-family: "Liberation Mono", monospace; font-size: 12.6px; }
svg { display: block; flex: none; }

/* browser chrome */
.browser {
  height: 118px;
  flex: none;
  border-top: 2px solid #2f5cb4;
  background: linear-gradient(90deg, #fbf8f1 0%, #fbf8ef 55%, #f3efdf 100%);
  display: flex;
  flex-direction: column;
  border-bottom: 1px solid #8a8578;
}
.menubar {
  height: 30px;
  display: flex;
  align-items: center;
  padding-left: 8px;
  gap: 21px;
  font-size: 14px;
  color: #333;
  border-bottom: 1px solid #c8c5ba;
  flex: none;
}
.menu { width: 51px; white-space: nowrap; line-height: 1; }
.menu-wide { width: 67px; }
.addressrow {
  height: 43px;
  display: flex;
  align-items: center;
  padding-left: 3px;
  flex: none;
  padding-top: 2px;
}
.navpill { display: flex; align-items: center; gap: 2px; width: 63px; }
.caret {
  display: block;
  width: 0;
  height: 0;
  border: 4px solid transparent;
  border-top: 4px solid #222;
  border-bottom: 0;
  flex: none;
}
.caret-nav { margin: 0 15px 0 9px; border-width: 5px 5px 0; }
.address {
  width: 1217px;
  height: 27px;
  display: flex;
  align-items: center;
  background: #fff;
  border: 2px solid #c4cedc;
  padding-left: 2px;
}
.pageicon { margin-right: 8px; }
.url {
  flex: 1;
  font-family: "Liberation Mono", monospace;
  font-size: 12.4px;
  color: #222;
  line-height: 1;
  padding-top: 3px;
}
.addr-drop {
  width: 20px;
  height: 23px;
  background: #bcd0f4;
  display: flex;
  align-items: center;
  justify-content: center;
}
.chromebtn {
  width: 26px;
  height: 27px;
  margin-left: 6px;
  border: 1px solid #c8c8c4;
  border-radius: 4px;
  background: linear-gradient(#f9f8f4, #e9e7dc);
  display: flex;
  align-items: center;
  justify-content: center;
}
.searchbox {
  width: 242px;
  height: 27px;
  margin-left: 11px;
  background: #fff;
  border: 2px solid #c4cedc;
  font-size: 14px;
  color: #aaa;
  line-height: 18px;
  padding-left: 3px;
}
.searchbtn {
  width: 42px;
  height: 27px;
  margin-left: 6px;
  display: flex;
  align-items: center;
  padding-left: 3px;
  gap: 6px;
  border: 1px solid #c8c8c4;
  border-right: 0;
  border-radius: 4px 0 0 4px;
  background: linear-gradient(#f9f8f4, #e9e7dc);
}
.caret-blue { border-top-color: #2a58c8; }
.tabrow {
  flex: 1;
  display: flex;
  align-items: flex-end;
  border-bottom: 4px solid #c4d4ee;
  min-height: 0;
}
.favs {
  width: 77px;
  flex: none;
  align-self: center;
  display: flex;
  gap: 14px;
  padding-left: 4px;
  margin-top: -4px;
}
.tab {
  width: 370px;
  flex: none;
  height: 39px;
  margin-bottom: -3px;
  border: 1px solid #b8bec6;
  border-bottom: 0;
  border-radius: 4px 4px 0 0;
  background: linear-gradient(#f4f7fc 0%, #d8e7fb 40%, #bcd6fa 100%);
  display: flex;
  align-items: center;
  padding: 0 0 2px 4px;
  gap: 3px;
}
.tabtext {
  font-family: "Liberation Mono", monospace;
  font-size: 12.4px;
  white-space: nowrap;
  line-height: 1;
}
.newtab {
  width: 36px;
  flex: none;
  height: 33px;
  border: 1px solid #b0b6be;
  border-bottom: 0;
  border-radius: 4px 4px 0 0;
  background: linear-gradient(#f2f1ec 0%, #eeeeea 25%, #d3d8e6 35%, #d6dbe8 65%, #efeff0 75%, #f2f1ec 100%);
}
.commands {
  flex: 1;
  min-width: 0;
  align-self: center;
  display: flex;
  align-items: center;
  padding-left: 830px;
  margin-top: -4px;
  font-size: 14px;
  color: #333;
  white-space: nowrap;
}
.caret-cmd { margin: 0 0 0 10px; }
.caret-faded { border-top-color: #cfccc0; }
.caret-last { margin-left: 7px; }
.cmd-rss { margin-left: 15px; }
.cmd-print { margin-left: 15px; }
.cmd-page { margin-left: 11px; }
.cmdtext { margin-left: 5px; line-height: 1; }
.cmd-gear { margin-left: 7px; }
.more { margin: -28px 0 0 12px; font-size: 15px; font-weight: bold; font-family: "Liberation Sans", sans-serif; color: #222; }

/* banner */
.banner {
  height: 74px;
  flex: none;
  display: flex;
  align-items: center;
  padding: 0 12px 0 17px;
  background: linear-gradient(#a9d980 0%, #8ccb60 40%, #74be4a 92%, #a6dc80 95%, #a6dc80 96%);
  border-bottom: 4px solid #1d5a0c;
  position: relative;
}
.sys-title {
  margin: 0 auto 0 0;
  font-size: 32.5px;
  font-weight: 400;
  letter-spacing: .9px;
  color: #102a08;
  line-height: 1;
}
.welcome {
  font-size: 20px;
  letter-spacing: 1.1px;
  font-weight: 700;
  color: #111;
  margin: 4px 19px 0 0;
  line-height: 1;
}
.banner-link {
  font-size: 15.4px;
  color: #1c3a10;
  line-height: 1;
  margin: 8px 0 0 6px;
  white-space: nowrap;
}

/* workspace */
.workspace {
  flex: 1;
  min-height: 0;
  display: flex;
  background: #fff;
  border-bottom: 2px solid #fff;
}
.sidebar {
  width: 202px;
  flex: none;
  height: 100%;
  background: #9cd676;
  padding: 12px 8px 0;
  display: flex;
  flex-direction: column;
  gap: 7.5px;
}
.card { width: 185px; flex: none; }
.card-head {
  height: 31px;
  margin: 0;
  border-bottom: 1px solid #d8dcc0;
  border-radius: 5px 5px 0 0;
  background: linear-gradient(90deg, #fff 15%, #e8f4a8 55%, #dcf088 100%);
  font-size: 16px;
  font-weight: 700;
  color: #5a680c;
  text-align: left;
  padding: 0 0 5px 40px;
  display: flex;
  align-items: center;
  line-height: 1;
  position: relative;
  white-space: nowrap;
}
.toggle {
  position: absolute;
  right: 8px;
  top: 6px;
  width: 17px;
  height: 17px;
  border-radius: 50%;
  background: #fff;
  box-shadow: 1px 1px 2px #99a070;
  display: flex;
  align-items: center;
  justify-content: center;
}
.card-body {
  margin: 0;
  padding: 5.5px 0;
  list-style: none;
  background: #fff;
}
.card-body li {
  height: 30px;
  display: flex;
  align-items: center;
  padding: 0 0 1px 31px;
  font-size: 15px;
  color: #333;
  line-height: 1;
  position: relative;
}
.card-body li::before {
  content: "";
  position: absolute;
  left: 17px;
  top: 12px;
  width: 7px;
  height: 7px;
  border-radius: 2px;
  background: #a8c4ec;
  border: 1px solid #7a8898;
}
.splitter {
  width: 20px;
  flex: none;
  height: 100%;
  background: #d0f0a4;
  display: flex;
  flex-direction: column;
  justify-content: space-between;
}
.split-btn {
  height: 21px;
  background: #acdf70;
  border-right: 1px solid #2e5a20;
  border-bottom: 1px solid #2e5a20;
  color: #e4f4cc;
  font-size: 12px;
  line-height: 18px;
  text-align: center;
  margin-top: 1px;
}
.split-btn:last-child { margin-top: 0; }

.content {
  flex: 1;
  min-width: 0;
  height: 100%;
  padding: 20px 0 0 24px;
}
.editor {
  width: 993px;
  height: 100%;
  display: flex;
  flex-direction: column;
  border-left: 2px solid #a8a8a2;
  border-right: 2px solid #a8a8a2;
}
.toolbar {
  height: 92px;
  flex: none;
  display: flex;
  background: #ecead9;
  border-top: 1px solid #cfcdbc;
  border-bottom: 3px solid #807c70;
}
.grip {
  width: 15px;
  flex: none;
  border-right: 2px solid #b0aea0;
}
.rows {
  flex: 1;
  display: flex;
  flex-direction: column;
  padding-left: 9px;
}
.tbrow {
  height: 30px;
  flex: none;
  display: flex;
  align-items: center;
}
.tbrow-form { height: 28px; }
.tb {
  width: 30px;
  height: 30px;
  flex: none;
  display: flex;
  align-items: center;
  justify-content: center;
}
.gap { margin-left: 8px; }
.gap-s { margin-left: 8px; }
.faded { opacity: .75; }
.sep {
  width: 2px;
  height: 22px;
  margin: 0 2px;
  flex: none;
  background: #bdb98a;
}
.src {
  display: flex;
  align-items: center;
  gap: 4px;
  width: 78px;
  font-size: 15px;
  color: #333;
  flex: none;
  padding-left: 6px;
}
.src b { font-weight: 400; line-height: 1; margin-top: -4px; }
.active {
  background: #b4cdee;
  border: 1px solid #3a6cc0;
}
.gl-b { font: 700 15px "Liberation Serif", serif; color: #111; }
.gl-i { font: italic 700 15px "Liberation Serif", serif; color: #444; }
.gl-u { font: 700 14px "Liberation Serif", serif; color: #444; }
.gl-s { font: 700 10px "Liberation Serif", serif; color: #555; }
.gl-x { font: 700 13px "Liberation Sans", sans-serif; color: #333; }
.gl-x sub, .gl-x sup { font-size: 8px; color: #3848b8; font-weight: 400; }
.svgtxt { font: 8px "Liberation Sans", sans-serif; fill: #444; }
.svgfade { fill: #aaa; }
.svggreen { fill: #2a8a48; font-size: 7px; }
.svgT { font: 700 16px "Liberation Serif", serif; fill: #222; }
.svgQ { font: 700 13px "Liberation Sans", sans-serif; fill: #2838a8; }
.lbl {
  width: 37px;
  margin-left: 6px;
  font-size: 14.5px;
  color: #444;
  flex: none;
  line-height: 1;
  padding-bottom: 3px;
}
.combo {
  width: 124px;
  height: 23px;
  display: flex;
  flex: none;
  border: 1px solid #c4c2b0;
}
.combo-in { flex: 1; background: #fff; }
.combo-btn { width: 18px; background: #ecead9; border-left: 1px solid #d4d2c0; }
.combo-s { width: 87px; }
.tb-color { margin-left: 8px; }
.tb-color2 { margin-left: 10px; }
.tb-max { margin-left: 18px; }

.doc {
  flex: 1;
  min-height: 0;
  padding: 6px 0 0 5px;
  position: relative;
  background: #fff;
}
.doc-title {
  margin: 0 0 31px;
  font-size: 39px;
  font-weight: 400;
  color: #111;
  line-height: 44px;
  text-align: center;
  padding-left: 3px;
  letter-spacing: 1.5px;
}
.sel-line {
  margin: 0;
  height: 18.7px;
  line-height: 18.7px;
  font-family: "Liberation Sans", sans-serif;
  font-size: 16px;
}
.sel {
  display: inline-block;
  height: 18.7px;
  vertical-align: top;
  padding-right: 3px;
  background: #316ac5;
  color: #e8f0ff;
}
.sel-blank { width: 4px; padding: 0; }
.ibeam { position: absolute; left: 11px; top: 77px; }

.scrollbar {
  width: 13px;
  flex: none;
  margin-left: auto;
  height: 100%;
  display: flex;
  flex-direction: column;
  padding-top: 3px;
}
.sb-btn {
  height: 18px;
  background: #c2d2f8;
  display: flex;
  align-items: center;
  justify-content: center;
  flex: none;
}
.sb-thumb { height: 498px; margin-top: 5px; background: #c6d2fa; border-bottom: 1px solid #9cb0e0; flex: none; }
.sb-track { flex: 1; background: #f6f6fc; }
.sb-btn:last-child { margin-bottom: 2px; }

/* status bar */
.statusbar {
  height: 28px;
  flex: none;
  background: #f1efe2;
  border-top: 2px solid #b4b1a3;
  display: flex;
  align-items: center;
  font-size: 14px;
  color: #222;
}
.status-done { width: 1310px; flex: none; line-height: 1; padding-bottom: 3px; }
.st-cell { width: 30px; height: 100%; border-left: 1px solid #fff; flex: none; }
.st-zone {
  width: 198px;
  height: 100%;
  flex: none;
  border-left: 1px solid #fff;
  display: flex;
  align-items: center;
  padding-left: 5px;
  gap: 6px;
}
.zone-text { font: 12.4px "Liberation Mono", monospace; color: #333; padding-top: 2px; }
.st-zoom {
  flex: 1;
  height: 100%;
  border-left: 1px solid #fff;
  display: flex;
  align-items: center;
  padding-left: 15px;
  gap: 2px;
}
.zoom-text { font: 700 12px "Liberation Sans", sans-serif; color: #333; }
.caret-zoom { margin-left: 14px; }

/* taskbar */
.taskbar {
  height: 28px;
  flex: none;
  display: flex;
  align-items: flex-end;
  background: linear-gradient(#2f6fe2 0%, #2c66dc 50%, #2a62d4 100%);
  border-top: 2px solid #3a78e8;
}
.start {
  width: 115px;
  height: 100%;
  flex: none;
  display: flex;
  align-items: center;
  padding-left: 10px;
  gap: 10px;
  background: linear-gradient(#4a9a4a, #3d8a3e);
  border-radius: 0 10px 0 0;
}
.start-text {
  color: #f0f4e8;
  font-size: 22px;
  font-style: italic;
  line-height: 1;
}
.quick {
  width: 79px;
  height: 100%;
  flex: none;
  display: flex;
  align-items: center;
  padding-left: 16px;
  gap: 11px;
}
.task {
  width: 196px;
  height: 23px;
  margin-right: 3px;
  flex: none;
  display: flex;
  align-items: center;
  padding: 3px 0 0 11px;
  gap: 5px;
  background: #3f82ec;
  border-radius: 3px 3px 0 0;
  color: #f2f6ff;
  font: 12.4px "Liberation Mono", monospace;
  white-space: nowrap;
}
.task-active { width: 199px; margin-right: 0; padding-left: 15px; gap: 3px; background: #1f50b4; }
.kbd { margin: 0 24px 4px auto; }
.tray {
  width: 244px;
  height: 100%;
  flex: none;
  display: flex;
  align-items: center;
  padding-right: 8px;
  background: #1f9ae8;
  border-left: 1px solid #1a4ea8;
}
.tray-back { margin-left: -11px; position: relative; }
.tray-cam { margin-left: 0; }
.tray-qq { margin-left: 2px; }
.tray-first { margin-left: auto; }
.tray-icon { margin-left: 3px; }
.clock {
  margin-left: 8px;
  color: #eef6ff;
  font: 15px "Liberation Sans", sans-serif;
  letter-spacing: .4px;
}
```
